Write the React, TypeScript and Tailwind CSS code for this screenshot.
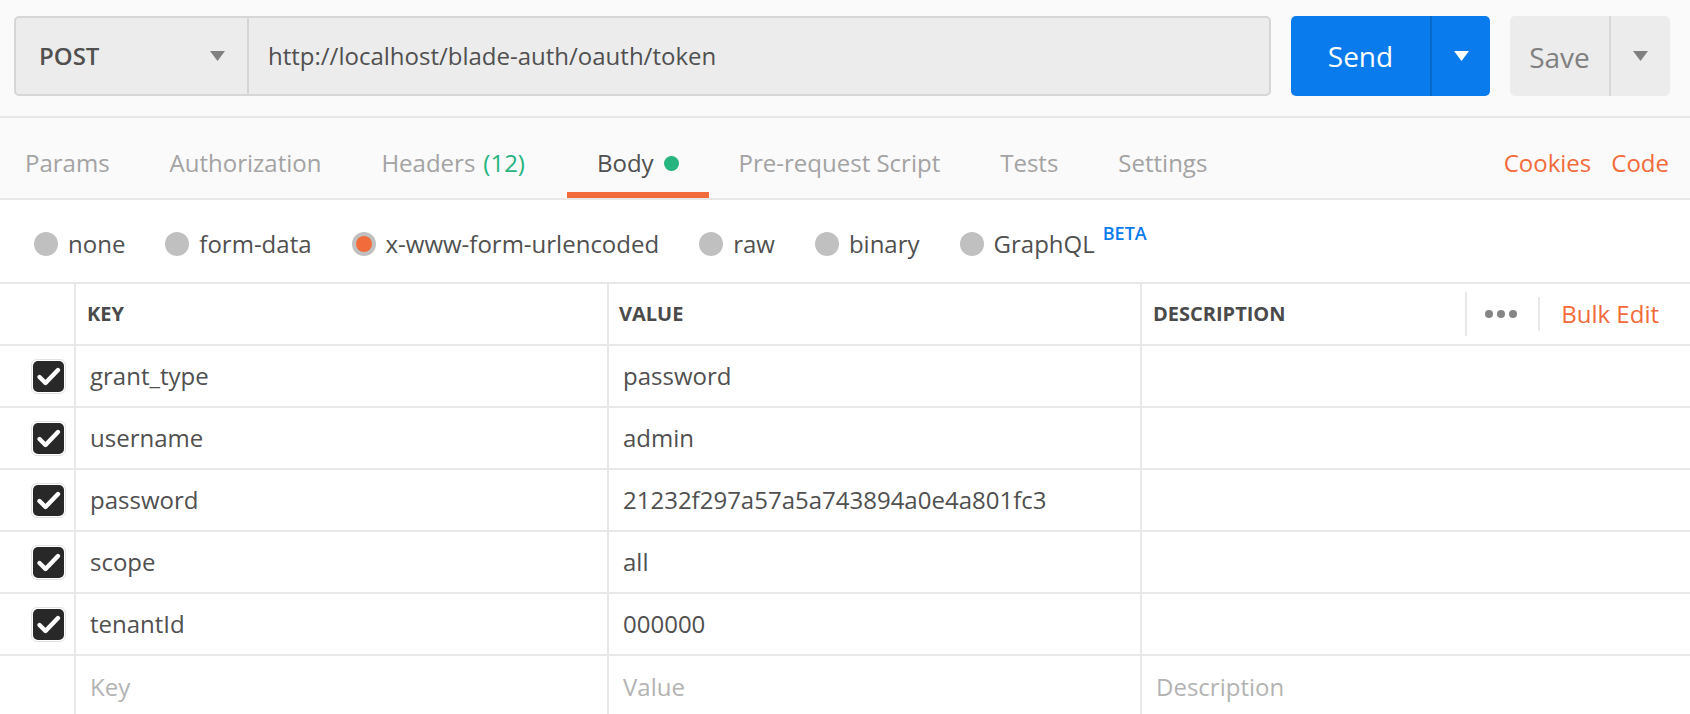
import type { FC } from "react";

const rows = [
    { key: "grant_type", value: "password" },
    { key: "username", value: "admin" },
    { key: "password", value: "21232f297a57a5a743894a0e4a801fc3" },
    { key: "scope", value: "all" },
    { key: "tenantId", value: "000000" },
];

const Caret: FC<{ color: string }> = ({ color }) => (
    <svg width="15" height="10" viewBox="0 0 15 10">
        <path d="M0 0 L15 0 L7.5 10 Z" fill={color} />
    </svg>
);

const Checkbox: FC = () => (
    <div className="rounded-[6px] border border-[#e2e2e2] p-px">
        <div className="flex h-[31px] w-[31px] items-center justify-center rounded-[5px] bg-[#282828]">
            <svg width="31" height="31" viewBox="0 0 31 31">
                <path d="M6.5 16 L12.5 22 L25 9" fill="none" stroke="#fff" strokeWidth="4.4" strokeLinecap="round" strokeLinejoin="round" />
            </svg>
        </div>
    </div>
);

const Radio: FC<{ label: string; checked?: boolean }> = ({ label, checked }) => (
    <div className="flex items-center gap-[10px]">
        <div className="flex h-[24px] w-[24px] items-center justify-center rounded-full bg-[#c0c0c0]">
            {checked && <div className="h-[16px] w-[16px] rounded-full bg-[#f26b3a]" />}
        </div>
        <span>{label}</span>
    </div>
);

const tabs = ["Params", "Authorization", "Headers", "Body", "Pre-request Script", "Tests", "Settings"];

export default function App() {
    return (
        <div className="h-[714px] w-[1690px] overflow-hidden bg-white font-['Open_Sans',sans-serif] text-[24px] text-[#505050]">
            {/* Request bar */}
            <div className="flex h-[116px] items-start gap-[20px] bg-[#fafafa] pl-[14px] pr-[20px] pt-[16px]">
                <div className="flex h-[80px] flex-1 rounded-[5px] border-2 border-[#d6d6d6] bg-[#ececec]">
                    <div className="flex w-[233px] items-center justify-between border-r-2 border-[#d6d6d6] pl-[23px] pr-[22px]">
                        <span className="font-semibold">POST</span>
                        <Caret color="#808080" />
                    </div>
                    <div className="flex flex-1 items-center pl-[19px]">http://localhost/blade-auth/oauth/token</div>
                </div>
                <div className="flex h-[80px] w-[199px] overflow-hidden rounded-[5px] bg-[#097bed] text-[28px] text-white">
                    <div className="flex w-[139px] items-center justify-center">Send</div>
                    <div className="flex flex-1 items-center justify-center border-l-2 border-[#0868c9]">
                        <Caret color="#ffffff" />
                    </div>
                </div>
                <div className="flex h-[80px] w-[160px] overflow-hidden rounded-[5px] bg-[#ececec] text-[28px] text-[#808080]">
                    <div className="flex w-[99px] items-center justify-center pt-[2px]">Save</div>
                    <div className="flex flex-1 items-center justify-center border-l-2 border-[#d8d8d8]">
                        <Caret color="#808080" />
                    </div>
                </div>
            </div>

            {/* Tabs */}
            <div className="flex h-[84px] items-stretch border-y-2 border-[#e8e8e8] bg-[#fafafa]">
                {tabs.map((t, i) => {
                    const active = t === "Body";
                    return (
                        <div
                            key={t}
                            className={`relative flex items-center pt-[10px] ${i === 0 ? "pl-[25px]" : "pl-[30px]"} ${t === "Headers" ? "pr-[42px]" : "pr-[30px]"} ${active ? "text-[#505050]" : "text-[#a3a3a3]"}`}
                        >
                            <span>{t}</span>
                            {t === "Headers" && <span className="ml-[8px] text-[#26b47f]">(12)</span>}
                            {active && <span className="ml-[10px] h-[15px] w-[15px] rounded-full bg-[#26b47f]" />}
                            {active && <div className="absolute bottom-0 left-0 right-0 h-[6px] bg-[#f26b3a]" />}
                        </div>
                    );
                })}
                <div className="ml-auto flex items-center gap-[20px] pr-[21px] pt-[10px] text-[#f26b3a]">
                    <span>Cookies</span>
                    <span>Code</span>
                </div>
            </div>

            {/* Body types */}
            <div className="flex h-[82px] items-center gap-[40px] pl-[34px] pt-[6px]">
                <Radio label="none" />
                <Radio label="form-data" />
                <Radio label="x-www-form-urlencoded" checked />
                <Radio label="raw" />
                <Radio label="binary" />
                <div className="flex items-center">
                    <Radio label="GraphQL" />
                    <span className="mb-[22px] ml-[8px] text-[18px] font-semibold text-[#097bed]">BETA</span>
                </div>
            </div>

            {/* Table */}
            <div className="border-t-2 border-[#e8e8e8]">
                <div className="grid h-[62px] grid-cols-[76px_533px_533px_1fr] border-b-2 border-[#e8e8e8] text-[20px] font-bold text-[#4a4a4a]">
                    <div className="border-r-2 border-[#e8e8e8]" />
                    <div className="flex items-center border-r-2 border-[#e8e8e8] pl-[11px]">KEY</div>
                    <div className="flex items-center border-r-2 border-[#e8e8e8] pl-[10px]">VALUE</div>
                    <div className="flex items-center pl-[11px]">
                        <span>DESCRIPTION</span>
                        <div className="ml-auto flex items-center pr-[31px]">
                            <div className="h-[44px] w-[2px] bg-[#e8e8e8]" />
                            <div className="ml-[18px] flex gap-[4px]">
                                <span className="h-[8px] w-[8px] rounded-full bg-[#858585]" />
                                <span className="h-[8px] w-[8px] rounded-full bg-[#858585]" />
                                <span className="h-[8px] w-[8px] rounded-full bg-[#858585]" />
                            </div>
                            <div className="ml-[21px] h-[34px] w-[2px] bg-[#e8e8e8]" />
                            <span className="ml-[21px] text-[24px] font-normal text-[#f26b3a]">Bulk Edit</span>
                        </div>
                    </div>
                </div>
                {rows.map((r) => (
                    <div key={r.key} className="grid h-[62px] grid-cols-[76px_533px_533px_1fr] border-b-2 border-[#e8e8e8]">
                        <div className="flex items-center justify-end border-r-2 border-[#e8e8e8] pr-[8px]">
                            <Checkbox />
                        </div>
                        <div className="flex items-center border-r-2 border-[#e8e8e8] pl-[14px]">{r.key}</div>
                        <div className="flex items-center border-r-2 border-[#e8e8e8] pl-[14px]">{r.value}</div>
                        <div />
                    </div>
                ))}
                <div className="grid h-[62px] grid-cols-[76px_533px_533px_1fr] text-[#b3b3b3]">
                    <div className="border-r-2 border-[#e8e8e8]" />
                    <div className="flex items-center border-r-2 border-[#e8e8e8] pl-[14px]">Key</div>
                    <div className="flex items-center border-r-2 border-[#e8e8e8] pl-[14px]">Value</div>
                    <div className="flex items-center pl-[14px]">Description</div>
                </div>
            </div>
        </div>
    );
}
